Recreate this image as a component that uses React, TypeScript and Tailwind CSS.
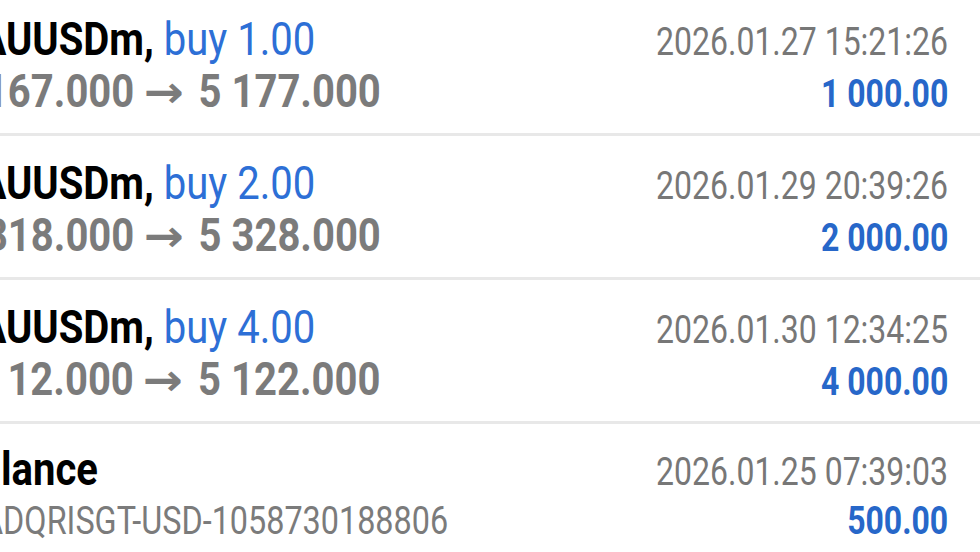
import React from "react";

type Row = {
  sym: string;
  side?: string;
  open?: string;
  close?: string;
  comment?: string;
  time: string;
  profit: string;
};

const rows: Row[] = [
  { sym: "XAUUSDm,", side: "buy 1.00", open: "5 167.000", close: "5 177.000", time: "2026.01.27 15:21:26", profit: "1 000.00" },
  { sym: "XAUUSDm,", side: "buy 2.00", open: "5 318.000", close: "5 328.000", time: "2026.01.29 20:39:26", profit: "2 000.00" },
  { sym: "XAUUSDm,", side: "buy 4.00", open: "5 \u200712.000", close: "5 122.000", time: "2026.01.30 12:34:25", profit: "4 000.00" },
  { sym: "Balance", comment: "ADQRISGT-USD-1058730188806", time: "2026.01.25 07:39:03", profit: "500.00" },
];

function HistoryRow({ r, last }: { r: Row; last: boolean }) {
  return (
    <div
      className={
        last
          ? "h-[144px] border-t-[3px] border-[#e8e8e8] pt-[19px] pr-[32px] flex flex-col"
          : "h-[144px] border-t-[3px] border-[#e8e8e8] pt-[21px] pr-[32px] flex flex-col"
      }
    >
      <div className="flex items-baseline justify-between h-[52px]">
        <div className="ml-[-46px] text-[46px] leading-[52px] origin-left scale-x-87 whitespace-nowrap">
          <span className="font-bold text-black">{r.sym}</span>
          {r.side ? <span className="text-[#2d6fd6]"> {r.side}</span> : null}
        </div>
        <div className="text-[39px] leading-[52px] origin-right scale-x-82 whitespace-nowrap text-[#777777]">
          {r.time}
        </div>
      </div>
      <div className="flex items-baseline justify-between h-[52px]">
        {r.open ? (
          <div className="ml-[-48px] text-[46px] leading-[52px] origin-left scale-x-87 whitespace-nowrap font-bold text-[#7b7b7b]">
            <span>{r.open}</span>
            <span className="inline-block ml-[10px] mr-[27px] font-['DejaVu_Sans',sans-serif] font-bold text-[44px] origin-left scale-x-125">
              →
            </span>
            <span>{r.close}</span>
          </div>
        ) : (
          <div className="ml-[-18px] text-[39px] leading-[50px] origin-left scale-x-83 whitespace-nowrap text-[#7b7b7b]">
            {r.comment}
          </div>
        )}
        <div className="text-[39px] leading-[52px] origin-right scale-x-82 whitespace-nowrap font-bold text-[#2767c9]">
          {r.profit}
        </div>
      </div>
    </div>
  );
}

export default function App() {
  return (
    <div className="w-[980px] h-[552px] overflow-hidden bg-white font-['Roboto',sans-serif]">
      <div className="mt-[-11px] flex flex-col">
        {rows.map((r, i) => (
          <HistoryRow key={i} r={r} last={i === rows.length - 1} />
        ))}
      </div>
    </div>
  );
}
